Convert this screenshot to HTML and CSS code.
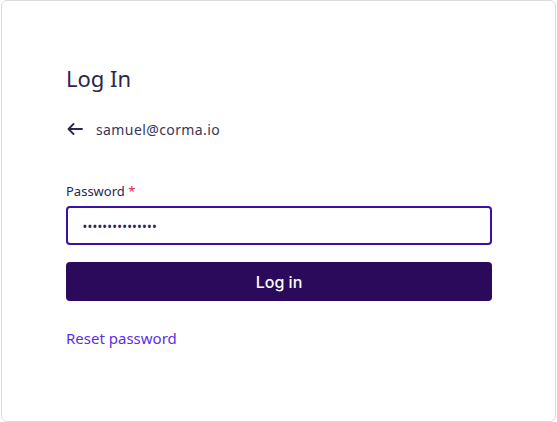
FILE: index.html
```html
<!DOCTYPE html>
<html>
<head>
<meta charset="utf-8">
<link rel="stylesheet" href="styles.css">
</head>
<body>
<div class="card">
  <h1 class="title">Log In</h1>
  <div class="account">
    <svg class="back" width="16" height="12" viewBox="0 0 16 12"><path d="M15 6H1.5M6.5 1L1.5 6l5 5" fill="none" stroke="#2a2650" stroke-width="1.8" stroke-linecap="round" stroke-linejoin="round"/></svg>
    <span class="email">samuel@corma.io</span>
  </div>
  <div class="field">
    <label class="label">Password <span class="req">*</span></label>
    <div class="input"><span class="dots">•••••••••••••••</span></div>
  </div>
  <button class="btn">Log in</button>
  <a class="reset">Reset password</a>
</div>
</body>
</html>
```
FILE: styles.css
```css
html, body { margin: 0; padding: 0; background: #fff; }
body { padding: 0 1px; font-family: "Noto Sans", "Open Sans", sans-serif; color: #2a2650; }
.card {
  box-sizing: border-box;
  height: 422px;
  border: 1px solid #dcdcdc;
  border-radius: 6px;
  padding: 62px 63px 0 64px;
  display: flex;
  flex-direction: column;
}
.title { margin: 0; font-size: 22px; font-weight: 400; line-height: 30px; color: #2a2650; }
.account { display: flex; align-items: center; gap: 13px; margin-top: 26px; height: 20px; }
.back { display: block; margin-left: 1px; }
.email { font-size: 14px; letter-spacing: 0.4px; color: #3a3556; }
.field { margin-top: 43px; display: flex; flex-direction: column; }
.label { font-size: 13px; color: #2a2650; line-height: 18px; }
.req { color: #d81b5a; }
.input {
  margin-top: 6px;
  height: 39px;
  box-sizing: border-box;
  border: 2px solid #3a10a8;
  border-radius: 4px;
  display: flex;
  align-items: center;
  padding-left: 15px;
}
.dots { font-size: 10px; font-weight: 700; letter-spacing: 1.2px; color: #2a2650; }
.btn {
  margin-top: 17px;
  height: 39px;
  border: none;
  border-radius: 4px;
  background: #2b0a5c;
  color: #fff;
  font-family: "Inter", "Noto Sans", sans-serif;
  font-size: 16px;
  font-weight: 500;
}
.reset { margin-top: 27px; font-size: 15px; color: #5c2ee6; line-height: 20px; align-self: flex-start; }
```
